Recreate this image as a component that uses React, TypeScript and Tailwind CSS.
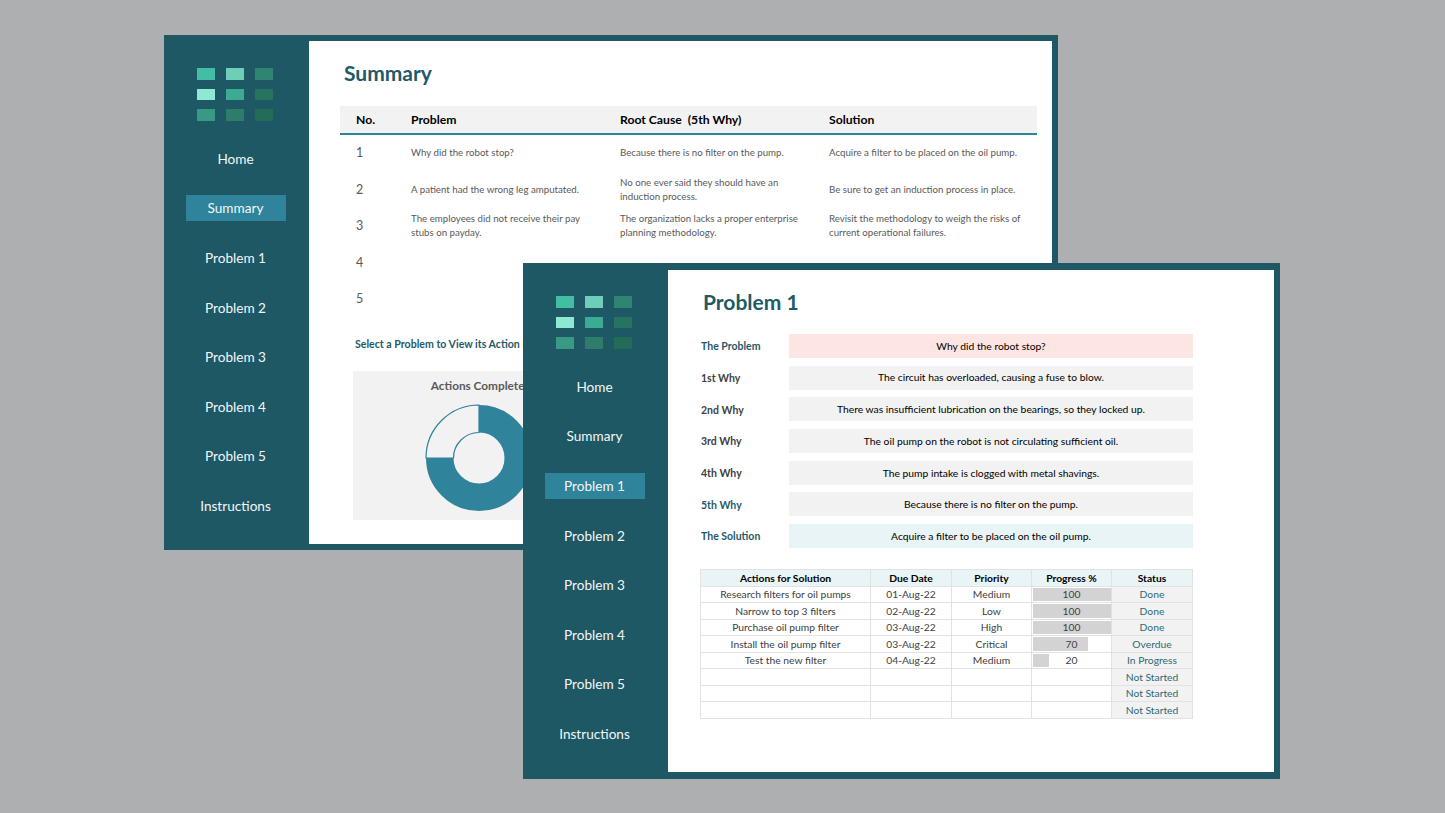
const FONT = "font-['Lato','Noto_Sans',sans-serif]";

const NAV_ITEMS = ["Home", "Summary", "Problem 1", "Problem 2", "Problem 3", "Problem 4", "Problem 5", "Instructions"];

const LOGO_COLORS = [
  "bg-[#42bea5]", "bg-[#6fceb7]", "bg-[#2e8570]",
  "bg-[#8ee8d4]", "bg-[#3bab92]", "bg-[#26735f]",
  "bg-[#389a83]", "bg-[#2e7d6a]", "bg-[#246b58]",
];

const SUMMARY_ROWS = [
  { no: 1, problem: "Why did the robot stop?", cause: "Because there is no filter on the pump.", solution: "Acquire a filter to be placed on the oil pump." },
  { no: 2, problem: "A patient had the wrong leg amputated.", cause: "No one ever said they should have an induction process.", solution: "Be sure to get an induction process in place." },
  { no: 3, problem: "The employees did not receive their pay stubs on payday.", cause: "The organization lacks a proper enterprise planning methodology.", solution: "Revisit the methodology to weigh the risks of current operational failures." },
  { no: 4, problem: "", cause: "", solution: "" },
  { no: 5, problem: "", cause: "", solution: "" },
];

const WHYS = [
  { label: "The Problem", text: "Why did the robot stop?", labelCls: "text-[#1f5a68]", boxCls: "bg-[#fde5e4]" },
  { label: "1st Why", text: "The circuit has overloaded, causing a fuse to blow.", labelCls: "text-[#404040]", boxCls: "bg-[#f2f2f2]" },
  { label: "2nd Why", text: "There was insufficient lubrication on the bearings, so they locked up.", labelCls: "text-[#404040]", boxCls: "bg-[#f2f2f2]" },
  { label: "3rd Why", text: "The oil pump on the robot is not circulating sufficient oil.", labelCls: "text-[#404040]", boxCls: "bg-[#f2f2f2]" },
  { label: "4th Why", text: "The pump intake is clogged with metal shavings.", labelCls: "text-[#404040]", boxCls: "bg-[#f2f2f2]" },
  { label: "5th Why", text: "Because there is no filter on the pump.", labelCls: "text-[#1f5a68]", boxCls: "bg-[#f2f2f2]" },
  { label: "The Solution", text: "Acquire a filter to be placed on the oil pump.", labelCls: "text-[#1f5a68]", boxCls: "bg-[#e9f4f6]" },
];

const ACTIONS = [
  { action: "Research filters for oil pumps", due: "01-Aug-22", priority: "Medium", progress: 100, status: "Done" },
  { action: "Narrow to top 3 filters", due: "02-Aug-22", priority: "Low", progress: 100, status: "Done" },
  { action: "Purchase oil pump filter", due: "03-Aug-22", priority: "High", progress: 100, status: "Done" },
  { action: "Install the oil pump filter", due: "03-Aug-22", priority: "Critical", progress: 70, status: "Overdue" },
  { action: "Test the new filter", due: "04-Aug-22", priority: "Medium", progress: 20, status: "In Progress" },
  { action: "", due: "", priority: "", progress: null, status: "Not Started" },
  { action: "", due: "", priority: "", progress: null, status: "Not Started" },
  { action: "", due: "", priority: "", progress: null, status: "Not Started" },
];

const CELL = "flex items-center justify-center border-r border-b border-[#e2e2e2]";
const COLS = "grid grid-cols-[170px_81px_80px_80px_81px]";

function Sidebar({ active }: { active: string }) {
  return (
    <aside className="flex w-[145px] shrink-0 flex-col items-center pr-[2px]">
      <div className="mt-[33px] -ml-[1px] grid grid-cols-[18px_18px_18px] gap-x-[11px] gap-y-[9px]">
        {LOGO_COLORS.map((color, i) => (
          <div key={i} className={`h-[11.5px] ${color}`} />
        ))}
      </div>
      <nav className="mt-[25px] flex flex-col items-center gap-[23.6px]">
        {NAV_ITEMS.map((item) => (
          <div
            key={item}
            className={`flex h-[26px] w-[100px] items-center justify-center pt-[1px] text-[13.6px] text-[#f2f7f8] ${
              item === active ? "bg-[#2f839b]" : ""
            }`}
          >
            {item}
          </div>
        ))}
      </nav>
    </aside>
  );
}

function Donut() {
  return (
    <svg width="110" height="110" viewBox="0 0 110 110" className="mt-[9px]">
      <circle cx="55" cy="55" r="39.25" fill="none" stroke="#2f839b" strokeWidth="27.5" />
      <path d="M55 2 A53 53 0 0 0 2 55 L29.5 55 A25.5 25.5 0 0 1 55 29.5 Z" fill="#f2f2f2" stroke="#2f839b" strokeWidth="1.2" />
    </svg>
  );
}

function SummaryWindow() {
  return (
    <section className={`absolute left-[164px] top-[35px] flex h-[515px] w-[894px] bg-[#1f5865] ${FONT}`}>
      <Sidebar active="Summary" />
      <main className="my-[6px] mr-[6px] flex-1 bg-white pl-[31px] pr-[15px]">
        <h1 className="ml-[4px] mt-[19px] text-[21px] font-bold leading-[26px] text-[#1f5a68]">Summary</h1>
        <div className="mt-[20px] grid h-[29px] grid-cols-[55px_209px_209px_1fr] items-center border-b-2 border-[#2f839b] bg-[#f2f2f2] pl-[16px] pt-[2px] text-[12.2px] font-bold text-black">
          <span>No.</span>
          <span>Problem</span>
          <span>Root Cause&nbsp; (5th Why)</span>
          <span>Solution</span>
        </div>
        <div>
          {SUMMARY_ROWS.map((row) => (
            <div key={row.no} className="grid h-[36.5px] grid-cols-[55px_209px_209px_1fr] items-center pl-[16px] text-[9.7px] leading-[14px] text-[#595959]">
              <span className="text-[12.5px]">{row.no}</span>
              <span className="pb-[2px] pr-[24px]">{row.problem}</span>
              <span className="pb-[2px] pr-[24px]">{row.cause}</span>
              <span className="pb-[2px] pr-[8px]">{row.solution}</span>
            </div>
          ))}
        </div>
        <p className="ml-[15px] mt-[19.5px] text-[10.6px] font-bold leading-[14px] text-[#1f5a68]">
          Select a Problem to View its Action Plan
        </p>
        <div className="ml-[13px] mt-[19.5px] flex h-[149px] w-[252px] flex-col items-center bg-[#f2f2f2] pt-[7px]">
          <h2 className="ml-[4px] text-[11.8px] font-bold leading-[16px] text-[#595959]">Actions Completed</h2>
          <Donut />
        </div>
      </main>
    </section>
  );
}

function ActionsTable() {
  return (
    <div className="mt-[21px] w-[493px] border-l border-t border-[#e2e2e2] text-[10.3px] leading-none">
      <div className={`${COLS} h-[16.5px] bg-[#e9f4f6] font-bold text-black`}>
        <div className={CELL}>Actions for Solution</div>
        <div className={CELL}>Due Date</div>
        <div className={CELL}>Priority</div>
        <div className={CELL}>Progress %</div>
        <div className={CELL}>Status</div>
      </div>
      {ACTIONS.map((row, i) => (
        <div key={i} className={`${COLS} h-[16.5px] text-[#404040]`}>
          <div className={CELL}>{row.action}</div>
          <div className={CELL}>{row.due}</div>
          <div className={CELL}>{row.priority}</div>
          <div className={`${CELL} relative`}>
            {row.progress !== null && (
              <div className="absolute bottom-[1px] left-[1px] top-[1px] bg-[#d3d3d3]" style={{ width: `${row.progress * 0.78}px` }} />
            )}
            <span className="relative">{row.progress}</span>
          </div>
          <div className={`${CELL} bg-[#f2f2f2] text-[#2a6a78]`}>{row.status}</div>
        </div>
      ))}
    </div>
  );
}

function ProblemWindow() {
  return (
    <section className={`absolute left-[523px] top-[263px] flex h-[516px] w-[757px] bg-[#1f5865] ${FONT}`}>
      <Sidebar active="Problem 1" />
      <main className="my-[7px] mr-[6px] flex-1 bg-white pl-[32px]">
        <h1 className="ml-[3px] mt-[18px] text-[21px] font-bold leading-[28px] text-[#1f5a68]">Problem 1</h1>
        <div className="mt-[18px] flex flex-col gap-[7.7px]">
          {WHYS.map((why) => (
            <div key={why.label} className="flex items-center">
              <span className={`w-[89px] pl-[1px] pt-[2px] text-[10.5px] font-bold ${why.labelCls}`}>{why.label}</span>
              <div className={`flex h-[24px] w-[404px] items-center justify-center pt-[1px] text-[10.3px] text-black ${why.boxCls}`}>
                {why.text}
              </div>
            </div>
          ))}
        </div>
        <ActionsTable />
      </main>
    </section>
  );
}

export default function App() {
  return (
    <div className="relative h-[813px] w-[1445px] overflow-hidden bg-[#aeafb1]">
      <SummaryWindow />
      <ProblemWindow />
    </div>
  );
}
